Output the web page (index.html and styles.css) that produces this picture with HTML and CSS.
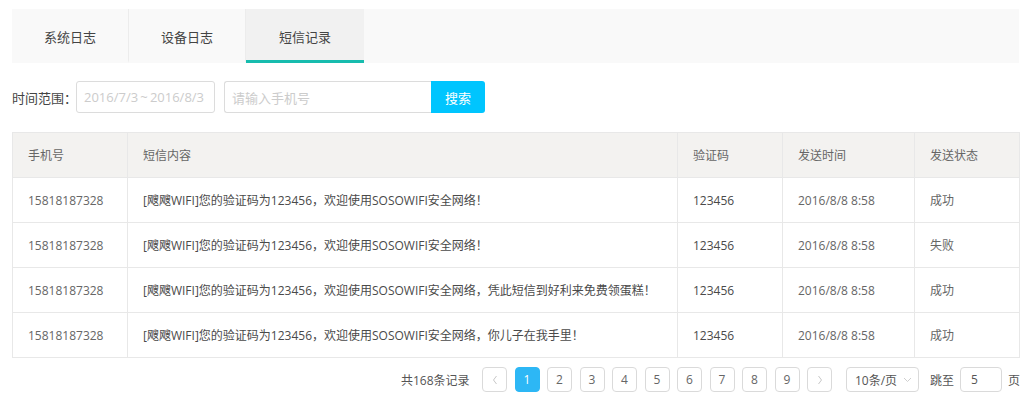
FILE: index.html
```html
<!DOCTYPE html>
<html lang="zh-CN">
<head>
<meta charset="utf-8">
<title>短信记录</title>
<link rel="stylesheet" href="styles.css">
</head>
<body>
<div class="page">
  <div class="tabs">
    <div class="tab">系统日志</div>
    <div class="tab">设备日志</div>
    <div class="tab active">短信记录</div>
  </div>

  <div class="filter">
    <span class="label">时间范围：</span>
    <div class="input date">2016/7/3&thinsp;~&thinsp;2016/8/3</div>
    <div class="search">
      <div class="input phone">请输入手机号</div>
      <button class="btn">搜索</button>
    </div>
  </div>

  <table class="grid">
    <colgroup>
      <col class="c1"><col class="c2"><col class="c3"><col class="c4"><col class="c5">
    </colgroup>
    <thead>
      <tr><th>手机号</th><th>短信内容</th><th>验证码</th><th>发送时间</th><th>发送状态</th></tr>
    </thead>
    <tbody>
      <tr><td>15818187328</td><td class="dark">[飕飕WIFI]您的验证码为123456，欢迎使用SOSOWIFI安全网络！</td><td class="dark">123456</td><td>2016/8/8 8:58</td><td>成功</td></tr>
      <tr><td>15818187328</td><td class="dark">[飕飕WIFI]您的验证码为123456，欢迎使用SOSOWIFI安全网络！</td><td class="dark">123456</td><td>2016/8/8 8:58</td><td>失败</td></tr>
      <tr><td>15818187328</td><td class="dark">[飕飕WIFI]您的验证码为123456，欢迎使用SOSOWIFI安全网络，凭此短信到好利来免费领蛋糕！</td><td class="dark">123456</td><td>2016/8/8 8:58</td><td>成功</td></tr>
      <tr><td>15818187328</td><td class="dark">[飕飕WIFI]您的验证码为123456，欢迎使用SOSOWIFI安全网络，你儿子在我手里！</td><td class="dark">123456</td><td>2016/8/8 8:58</td><td>成功</td></tr>
    </tbody>
  </table>

  <div class="pager">
    <span class="total">共168条记录</span>
    <span class="pg arrow"><svg width="8" height="10" viewBox="0 0 8 10"><path d="M5.5 1 L2.5 5 L5.5 9" fill="none" stroke="#c8c8c8" stroke-width="1"/></svg></span>
    <span class="pg cur">1</span>
    <span class="pg">2</span>
    <span class="pg">3</span>
    <span class="pg">4</span>
    <span class="pg">5</span>
    <span class="pg">6</span>
    <span class="pg">7</span>
    <span class="pg">8</span>
    <span class="pg">9</span>
    <span class="pg arrow"><svg width="8" height="10" viewBox="0 0 8 10"><path d="M2.5 1 L5.5 5 L2.5 9" fill="none" stroke="#c8c8c8" stroke-width="1"/></svg></span>
    <span class="size">10条/页<svg width="9" height="6" viewBox="0 0 9 6"><path d="M1 1 L4.5 4.5 L8 1" fill="none" stroke="#cfcfcf" stroke-width="1"/></svg></span>
    <span class="jump">跳至</span>
    <span class="jumpbox">5</span>
    <span class="unit">页</span>
  </div>
</div>
</body>
</html>
```
FILE: styles.css
```css
* { box-sizing: border-box; }
html, body { margin: 0; padding: 0; background: #fff; }
body {
  font-family: "Open Sans", "Noto Sans CJK SC", sans-serif;
  font-size: 12px;
  color: #666;
}
.page {
  width: 1007px;
  margin-left: 12px;
  padding-top: 9px;
}
.tabs {
  display: flex;
  height: 54px;
  background: #f9f9f9;
}
.tab {
  width: 117px;
  display: flex;
  align-items: center;
  justify-content: center;
  color: #444;
  font-size: 13px;
  border-right: 1px solid #ececec;
  border-bottom: 3px solid transparent;
  padding-top: 3px;
}
.tab.active {
  background: #f1f1f1;
  border-bottom-color: #17bcae;
  border-right: none;
  width: 118px;
}
.filter {
  display: flex;
  align-items: center;
  margin-top: 18px;
  height: 32px;
}
.label {
  color: #444;
  width: 64px;
  font-size: 13px;
  white-space: nowrap;
  flex-shrink: 0;
}
.input {
  height: 32px;
  border: 1px solid #dcdcdc;
  border-radius: 3px;
  color: #cccccc;
  display: flex;
  align-items: center;
  padding-left: 7px;
  white-space: nowrap;
  overflow: hidden;
  font-size: 13px;
  flex-shrink: 0;
}
.date { width: 139px; }
.search { display: flex; margin-left: 9px; }
.phone {
  width: 207px;
  border-radius: 3px 0 0 3px;
  border-right: none;
}
.btn {
  width: 54px;
  height: 32px;
  border: none;
  background: #00c5fe;
  color: #fff;
  font: inherit;
  font-size: 13px;
  border-radius: 0 3px 3px 0;
  padding: 0;
}
.grid {
  margin-top: 19px;
  width: 1007px;
  border-collapse: collapse;
  table-layout: fixed;
  border: 1px solid #e8e8e8;
}
.c1 { width: 115px; }
.c2 { width: 550px; }
.c3 { width: 105px; }
.c4 { width: 132px; }
.c5 { width: 105px; }
.grid th, .grid td {
  height: 45px;
  padding: 0 0 0 15px;
  text-align: left;
  font-weight: normal;
  border: 1px solid #e8e8e8;
  white-space: nowrap;
  overflow: hidden;
}
.grid th { background: #f3f2f0; color: #666; }
.grid td { color: #666; }
.grid td.dark { color: #4a4a4a; }
.pager {
  display: flex;
  align-items: center;
  margin-top: 9px;
  padding-left: 389px;
  height: 25px;
  white-space: nowrap;
}
.pager > * { flex-shrink: 0; }
.total { color: #555; width: 81px; }
.pg {
  width: 25px;
  height: 25px;
  border: 1px solid #dadada;
  border-radius: 4px;
  display: flex;
  align-items: center;
  justify-content: center;
  margin-right: 7.5px;
  color: #666;
}
.pg.cur { background: #2db7f5; border-color: #2db7f5; color: #fff; }
.size {
  margin-left: 6.5px;
  width: 73px;
  height: 25px;
  border: 1px solid #dadada;
  border-radius: 4px;
  display: flex;
  align-items: center;
  justify-content: space-between;
  padding: 0 6px 0 8px;
  color: #555;
}
.jump { margin-left: 11px; color: #555; }
.jumpbox {
  margin-left: 6px;
  width: 42px;
  height: 25px;
  border: 1px solid #dadada;
  border-radius: 4px;
  display: flex;
  align-items: center;
  padding-left: 10px;
  color: #555;
}
.unit { margin-left: 6px; color: #555; }
```
